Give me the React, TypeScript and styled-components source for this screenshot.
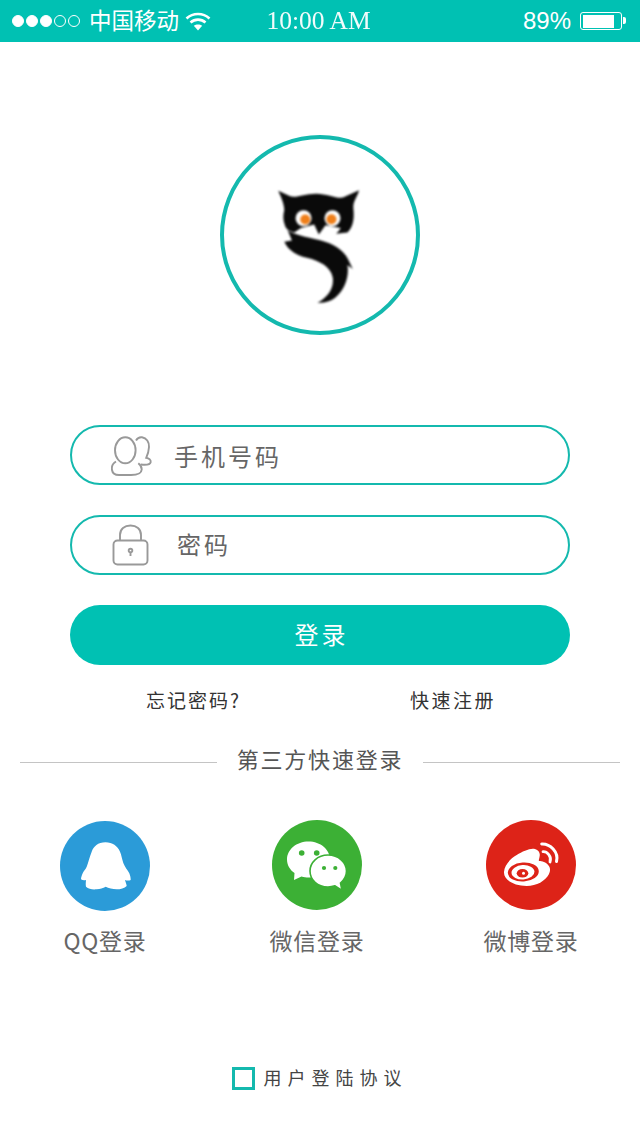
import styled, { createGlobalStyle } from "styled-components";

const GlobalStyle = createGlobalStyle`
   html, body {
      margin: 0;
      padding: 0;
      background: #fff;
   }
   * { box-sizing: border-box; }
`;

const TEAL = "#00c1b3";
const LINE = "#14b9ae";
const CJK = `"Noto Sans CJK SC", "Noto Sans", sans-serif`;

const Page = styled.main`
   width: 640px;
   height: 1136px;
   display: flex;
   flex-direction: column;
   overflow: hidden;
   background: #fff;
   font-family: ${CJK};
`;

// Barra de status do topo
const StatusBar = styled.header`
   height: 42px;
   flex: none;
   background: ${TEAL};
   color: #fff;
   display: grid;
   grid-template-columns: 1fr auto 1fr;
   align-items: center;
   padding: 0 18px 0 12px;
`;

const StatusLeft = styled.div`
   display: flex;
   align-items: center;
`;

const Signal = styled.div`
   display: flex;
   gap: 2px;
   margin-right: 9px;
`;

const SignalDot = styled.span<{ $on: boolean }>`
   width: 12px;
   height: 12px;
   border-radius: 50%;
   border: 1px solid #fff;
   background: ${({ $on }) => ($on ? "#fff" : "transparent")};
`;

const Carrier = styled.span`
   font-size: 22.5px;
   line-height: 38px;
   margin: 0 6px 4px 0;
`;

const Clock = styled.span`
   font-family: "Liberation Serif", serif;
   font-size: 25.5px;
   margin-left: 3px;
   opacity: 0.95;
`;

const StatusRight = styled.div`
   display: flex;
   align-items: center;
   justify-content: flex-end;
   gap: 9px;
`;

const Percent = styled.span`
   font-family: "Liberation Sans", sans-serif;
   font-size: 24px;
`;

const Battery = styled.div`
   width: 42px;
   height: 18px;
   border: 1.5px solid #fff;
   border-radius: 3px;
   padding: 1.5px;
   position: relative;

   &::before {
      content: "";
      display: block;
      width: 85%;
      height: 100%;
      background: #fff;
   }

   &::after {
      content: "";
      position: absolute;
      right: -5px;
      top: 4px;
      width: 3px;
      height: 7px;
      border-radius: 0 2px 2px 0;
      background: #fff;
   }
`;

const LogoRing = styled.div`
   width: 200px;
   height: 200px;
   flex: none;
   margin: 93px auto 0 auto;
   border: 4px solid ${LINE};
   border-radius: 50%;
   display: flex;
   align-items: center;
   justify-content: center;
   padding: 22px 4px 0 0;
`;

const Owl = styled.svg`
   width: 87px;
   height: 118px;
   filter: blur(0.8px);
`;

const Form = styled.form`
   margin: 90px 70px 0 70px;
   display: flex;
   flex-direction: column;
   gap: 30px;
`;

const Field = styled.div`
   height: 60px;
   border: 2px solid ${LINE};
   border-radius: 30px;
   display: flex;
   align-items: center;
   padding-left: 39px;
`;

const FieldIcon = styled.svg`
   width: 42px;
   height: 42px;
   flex: none;
   fill: none;
   stroke: #999;
   stroke-width: 1.9;
`;

const FieldLabel = styled.span<{ $gap: number; $lift: number }>`
   margin-left: ${({ $gap }) => $gap}px;
   padding-bottom: ${({ $lift }) => $lift * 2}px;
   font-size: 24px;
   letter-spacing: 3px;
   color: #666;
`;

const LoginButton = styled.button`
   height: 60px;
   border: 0;
   border-radius: 30px;
   padding: 0 0 4px 3px;
   background: ${TEAL};
   color: #fff;
   font-family: ${CJK};
   font-size: 24px;
   letter-spacing: 3px;
`;

const LinkRow = styled.div`
   margin-top: 23px;
   padding: 0 144px 0 146px;
   display: flex;
   justify-content: space-between;
   font-size: 19px;
   line-height: 24px;
   color: #333;
`;

const LinkText = styled.a<{ $spacing: number }>`
   letter-spacing: ${({ $spacing }) => $spacing}px;
`;

const Divider = styled.div`
   margin-top: 34px;
   padding: 0 20px;
   height: 30px;
   display: flex;
   align-items: center;
   gap: 20px;
`;

const DividerLine = styled.span`
   flex: 1;
   height: 1px;
   margin-top: 3px;
   background: #c4c4c4;
`;

const DividerText = styled.span`
   padding-bottom: 6px;
   font-size: 22px;
   letter-spacing: 1.8px;
   color: #555;
`;

const SocialRow = styled.div`
   margin-top: 44px;
   padding: 0 49px 0 45px;
   display: flex;
   justify-content: space-between;
`;

const SocialItem = styled.div`
   width: 120px;
   display: flex;
   flex-direction: column;
   align-items: center;
   gap: 15px;

   &:nth-child(2) {
      margin-left: -2px;
   }
`;

const SocialIcon = styled.svg<{ $drop?: number }>`
   width: 90px;
   height: 90px;
   display: block;
   transform: translateY(${({ $drop }) => $drop ?? 0}px);
`;

const SocialLabel = styled.span`
   font-size: 23px;
   line-height: 30px;
   letter-spacing: 0.7px;
   color: #666;
   white-space: nowrap;
`;

const Agreement = styled.div`
   margin-top: 111px;
   height: 24px;
   display: flex;
   align-items: center;
   justify-content: center;
   gap: 9px;
   padding-right: 6px;
`;

const CheckBox = styled.span`
   width: 23px;
   height: 23px;
   border: 3px solid ${LINE};
`;

const AgreementText = styled.span`
   padding-bottom: 2px;
   font-size: 18px;
   letter-spacing: 6px;
   color: #444;
   margin-right: -5px;
`;

function WifiIcon() {
   return (
      <svg width="26" height="20" viewBox="0 0 26 20" fill="none" stroke="#fff" strokeWidth="2.6">
         <path d="M1.5 7.5C8 1.5 18 1.5 24.5 7.5" />
         <path d="M5.5 11.5C9.8 7.7 16.2 7.7 20.5 11.5" />
         <path d="M13 19.5L8.8 14.8C11.2 13 14.8 13 17.2 14.8Z" fill="#fff" stroke="none" />
      </svg>
   );
}

function OwlLogo() {
   return (
      <Owl viewBox="195 185 260 355">
         {/* cabeça */}
         <path
            fill="#0a0a0a"
            d="M204 196L240 213C262 218 285 204 320 205C350 205 385 222 400 216L447 195C442 215 428 228 430 250C433 280 430 305 412 322L378 326C385 318 390 312 392 308L346 300L326 328L312 298L272 308L252 322C236 318 226 310 224 300C218 285 218 270 222 255C222 235 212 215 204 196Z"
         />
         {/* corpo e cauda */}
         <path
            fill="#0a0a0a"
            d="M232 314C250 328 285 334 330 345C370 355 400 375 414 402L428 432L412 420C418 450 405 495 375 518C360 530 340 535 322 533C350 518 372 492 368 458C362 425 330 408 290 398C262 392 235 378 222 350L245 346Z"
         />
         <circle cx="280" cy="279" r="24" fill="#fff" />
         <circle cx="367" cy="279" r="24" fill="#fff" />
         <circle cx="285" cy="283" r="15" fill="#ef7f1a" />
         <circle cx="364" cy="282" r="15" fill="#ef7f1a" />
         <path fill="#0a0a0a" d="M312 272L338 272L326 322Z" />
      </Owl>
   );
}

function PersonIcon() {
   return (
      <FieldIcon viewBox="0 0 42 42">
         <ellipse cx="14.3" cy="16.3" rx="10.3" ry="13" />
         <path d="M5 27.5C1.5 29.5 0.5 33 1 36C1.5 39.5 4.5 41 8 41H20C25.5 41 30.5 39.5 30.7 35.5C30.8 33 29.5 31 27.3 29.3" />
         <path d="M25 6.5C26.5 4 29 3 31 3.3C35.5 4 38.3 8 38 13C37.8 17.5 36.5 21 35.2 23.8C37.8 24.3 40 26 39.7 28C39.3 30.5 36 31.3 29.7 30.5" />
      </FieldIcon>
   );
}

function LockIcon() {
   return (
      <FieldIcon viewBox="0 0 42 42">
         <rect x="2.5" y="16.5" width="34" height="24" rx="4" />
         <path d="M9 16.5V11C9 5 13.5 1.5 19.5 1.5C25.5 1.5 30 5 30 11V16.5" />
         <circle cx="19.5" cy="26.5" r="1.8" />
         <path d="M19.5 28.5V32" />
      </FieldIcon>
   );
}

function QQIcon() {
   return (
      <SocialIcon viewBox="0 0 90 90" $drop={1}>
         <circle cx="45" cy="45" r="45" fill="#2b9bd8" />
         <path
            fill="#fff"
            d="M45.5 21.3C38 21.3 33.5 25.5 31.7 30.7C29.5 36 28.5 41 26.7 45.7C25.5 48.5 23.5 50 22.7 52.3C21.8 54.5 21 56.5 21 58.3C22.5 59.5 24.5 59.5 26 59C25.8 61.5 25.5 63.5 26 65.7C28.5 68 32.5 68.8 36.7 68.3C40 68 43 67.2 45.7 65.7C48.5 67.2 52.5 68.2 56.7 68.3C60.5 68.3 64.5 67.5 66.7 65C66.5 63 65.5 61 65 59C66.5 59.6 69 59.8 70.7 59C70.7 56.5 70.2 54.5 69.3 52.3C67.5 49 64.8 46 63.3 42C62 38 61.5 34 60 30.7C57.5 25 52.5 21.3 45.5 21.3Z"
         />
      </SocialIcon>
   );
}

function WechatIcon() {
   return (
      <SocialIcon viewBox="0 0 90 90">
         <circle cx="45" cy="45" r="45" fill="#3cb035" />
         <path fill="#fff" d="M36.5 21.5C24.5 21.5 15 29.5 15 39.5C15 45 18 50 22.5 53L22 60L29.5 56.5C32 57.3 34 57.5 36.5 57.5C48.5 57.5 58 49.5 58 39.5C58 29.5 48.5 21.5 36.5 21.5Z" />
         <path
            fill="#fff"
            stroke="#3cb035"
            strokeWidth="1.6"
            d="M56 35C45.5 35 38 42.5 38 51C38 60 45.5 67 56 67C58.5 67 61 66.5 63 65.8L70 70.5L68.5 63C72 60 74.5 56 74.5 51C74.5 42.5 66.5 35 56 35Z"
         />
         <circle cx="29.7" cy="33" r="2.8" fill="#3cb035" />
         <circle cx="44.7" cy="33" r="2.8" fill="#3cb035" />
         <circle cx="52" cy="48" r="2.1" fill="#3cb035" />
         <circle cx="63.3" cy="48" r="2.1" fill="#3cb035" />
      </SocialIcon>
   );
}

function WeiboIcon() {
   return (
      <SocialIcon viewBox="0 0 90 90">
         <circle cx="45" cy="45" r="45" fill="#dd2318" />
         <path
            fill="#fff"
            d="M18 52C18.5 45 24 39 30.7 35C37 31 45 27.5 49 29C53 30.5 54.5 33 53.5 37C53.2 39 52.5 40.5 53 41C56 41 60 42 62.5 45.5C64.5 48 64.5 51 63 54C59.5 61 50.5 66 40.7 66C28 66 17.5 60 18 52Z"
         />
         <ellipse cx="37.3" cy="52" rx="15.5" ry="9.5" fill="#dd2318" transform="rotate(-4 37.3 52)" />
         <ellipse cx="37" cy="52.3" rx="11.5" ry="7.2" fill="#fff" transform="rotate(-4 37 52.3)" />
         <ellipse cx="36.5" cy="53.3" rx="5.8" ry="4.3" fill="#dd2318" />
         <circle cx="37.5" cy="53.3" r="1.5" fill="#fff" />
         <path d="M55.7 24C64 23.5 73 32 70.5 41.5" fill="none" stroke="#fff" strokeWidth="3" strokeLinecap="round" />
         <path d="M57 31.7C61 31.5 66 36 64 42" fill="none" stroke="#fff" strokeWidth="2.8" strokeLinecap="round" />
      </SocialIcon>
   );
}

export default function App() {
   return (
      <Page>
         <GlobalStyle />
         <StatusBar>
            <StatusLeft>
               <Signal>
                  {[true, true, true, false, false].map((on, i) => (
                     <SignalDot key={i} $on={on} />
                  ))}
               </Signal>
               <Carrier>中国移动</Carrier>
               <WifiIcon />
            </StatusLeft>
            <Clock>10:00 AM</Clock>
            <StatusRight>
               <Percent>89%</Percent>
               <Battery />
            </StatusRight>
         </StatusBar>

         <LogoRing>
            <OwlLogo />
         </LogoRing>

         <Form>
            <Field>
               <PersonIcon />
               <FieldLabel $gap={21} $lift={0}>手机号码</FieldLabel>
            </Field>
            <Field>
               <LockIcon />
               <FieldLabel $gap={24} $lift={2}>密码</FieldLabel>
            </Field>
            <LoginButton type="button">登录</LoginButton>
         </Form>

         <LinkRow>
            <LinkText $spacing={2}>忘记密码?</LinkText>
            <LinkText $spacing={2.5}>快速注册</LinkText>
         </LinkRow>

         <Divider>
            <DividerLine />
            <DividerText>第三方快速登录</DividerText>
            <DividerLine />
         </Divider>

         <SocialRow>
            <SocialItem>
               <QQIcon />
               <SocialLabel>QQ登录</SocialLabel>
            </SocialItem>
            <SocialItem>
               <WechatIcon />
               <SocialLabel>微信登录</SocialLabel>
            </SocialItem>
            <SocialItem>
               <WeiboIcon />
               <SocialLabel>微博登录</SocialLabel>
            </SocialItem>
         </SocialRow>

         <Agreement>
            <CheckBox />
            <AgreementText>用户登陆协议</AgreementText>
         </Agreement>
      </Page>
   );
}
